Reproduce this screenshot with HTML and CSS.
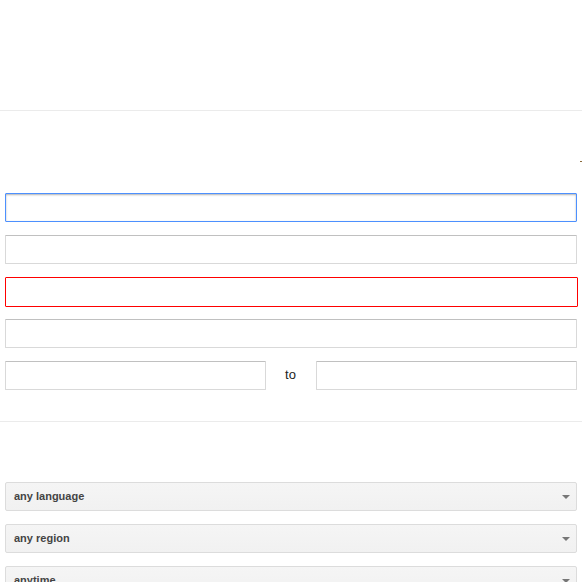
FILE: index.html
```html
<!DOCTYPE html>
<html>
<head>
<meta charset="utf-8">
<link rel="stylesheet" href="styles.css">
</head>
<body>
<div class="header"></div>
<div class="form">
  <span class="mark"></span>
  <input class="field focused" type="text">
  <input class="field" type="text">
  <input class="field error" type="text">
  <input class="field" type="text">
  <div class="range">
    <input class="field" type="text">
    <span class="to">to</span>
    <input class="field" type="text">
  </div>
</div>
<div class="selects">
  <div class="select"><span>any language</span><i class="arrow"></i></div>
  <div class="select"><span>any region</span><i class="arrow"></i></div>
  <div class="select"><span>anytime</span><i class="arrow"></i></div>
</div>
</body>
</html>
```

FILE: styles.css
```css
html, body {
  margin: 0;
  padding: 0;
  background: #fff;
  font-family: "Liberation Sans", Arial, sans-serif;
  overflow: hidden;
}
* { box-sizing: border-box; }
.header {
  height: 111px;
  border-bottom: 1px solid #ebebeb;
}
.form {
  position: relative;
  padding: 82px 5px 31px 5px;
  border-bottom: 1px solid #ebebeb;
  display: flex;
  flex-direction: column;
  gap: 13px;
}
.mark {
  position: absolute;
  right: 0;
  top: 50px;
  width: 2px;
  height: 1px;
  background: #8a6a3a;
}
.field {
  display: block;
  width: 100%;
  height: 29px;
  margin: 0;
  padding: 0 8px;
  border: 1px solid #d9d9d9;
  border-top-color: #c0c0c0;
  border-radius: 1px;
  background: #fff;
  font: 13px "Liberation Sans", Arial, sans-serif;
  outline: none;
}
.field.focused {
  border-color: #4d90fe;
  box-shadow: inset 0 1px 2px rgba(0,0,0,.3);
}
.field.error {
  border-color: #f00;
  height: 30px;
  width: calc(100% + 1px);
  margin-bottom: -1px;
}
.range {
  display: flex;
  align-items: center;
}
.range .field {
  width: 261px;
  flex: none;
}
.to {
  width: 50px;
  text-align: center;
  font-size: 13px;
  color: #222;
  padding-right: 1px;
  margin-top: -2px;
}
.selects {
  padding: 60px 5px 0 5px;
  display: flex;
  flex-direction: column;
  gap: 13px;
}
.select {
  position: relative;
  height: 29px;
  border: 1px solid #dcdcdc;
  border-radius: 2px;
  background: linear-gradient(#f5f5f5, #f1f1f1);
  display: flex;
  align-items: center;
  padding-left: 8px;
  padding-bottom: 2px;
  font-size: 11px;
  font-weight: bold;
  color: #444;
}
.arrow {
  position: absolute;
  right: 6px;
  top: 12px;
  width: 0;
  height: 0;
  border-left: 4px solid transparent;
  border-right: 4px solid transparent;
  border-top: 4px solid #777;
}
```
